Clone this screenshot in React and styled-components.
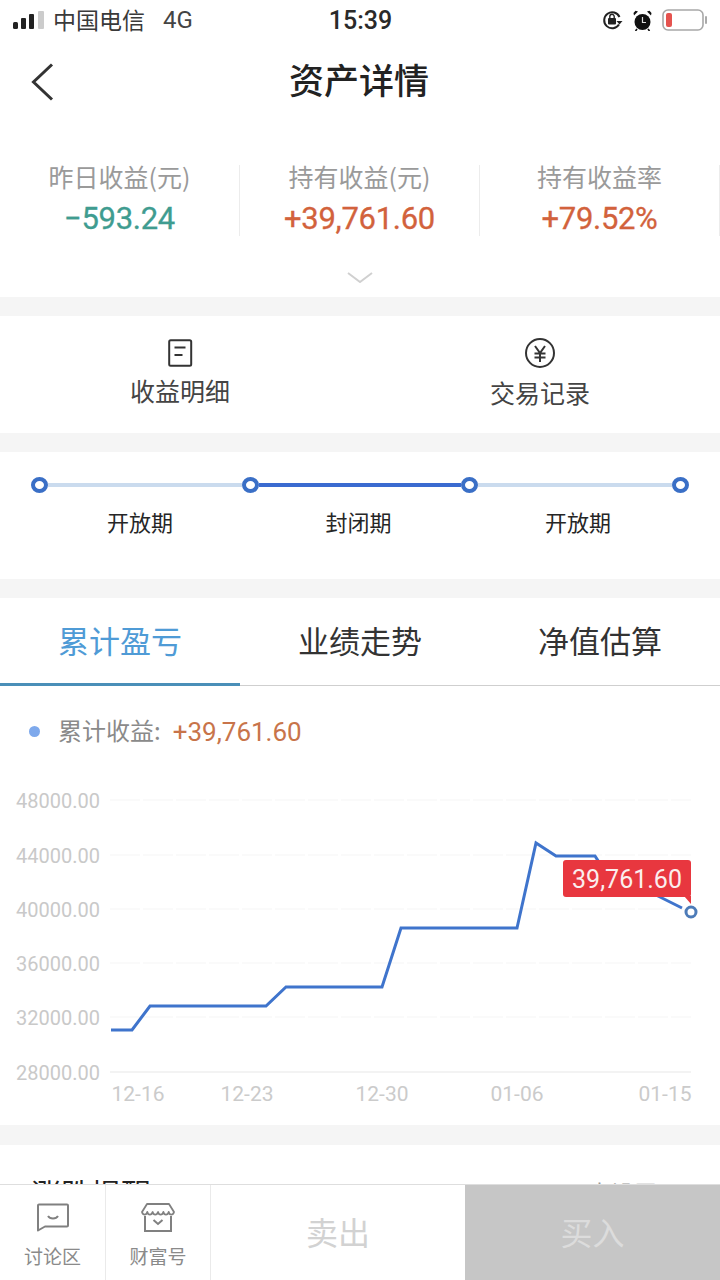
import styled, { createGlobalStyle } from 'styled-components';

const CJK = `"Noto Sans CJK SC", "Noto Sans", sans-serif`;
const NUM = `Roboto, "Noto Sans CJK SC", sans-serif`;

const GlobalStyle = createGlobalStyle`
  html, body {
    margin: 0;
    padding: 0;
    background: #fff;
    font-family: ${CJK};
  }
`;

const Page = styled.div`
  position: relative;
  width: 720px;
  height: 1280px;
  overflow: hidden;
  background: #fff;
`;
const StatusBar = styled.div`
  height: 38px;
  display: grid;
  grid-template-columns: 1fr auto 1fr;
  align-items: center;
  padding: 2px 12px 0 13px;
  box-sizing: border-box;
  color: #333;
`;
const StatusLeft = styled.div`
  display: flex;
  align-items: center;
`;
const Carrier = styled.span`
  margin: -3px 0 0 9px;
  font-size: 23px;
  line-height: 30px;
  color: #3a3a3a;
`;
const Net = styled.span`
  margin-left: 18px;
  font: 400 24px/30px ${NUM};
  color: #444;
`;
const Clock = styled.span`
  padding-top: 1px;
  font: 500 25px/30px ${NUM};
  color: #2a2a2a;
`;
const StatusRight = styled.div`
  display: flex;
  align-items: center;
  justify-content: flex-end;
  gap: 10px;
`;
const Nav = styled.div`
  height: 87px;
  display: grid;
  grid-template-columns: 1fr auto 1fr;
  align-items: center;
  padding: 0 30px;
`;
const Title = styled.h1`
  margin: 0 2px 6px 0;
  font-size: 35px;
  font-weight: 500;
  line-height: 44px;
  color: #222;
`;
const Gap = styled.div`
  height: ${(p) => p.$height || 19}px;
  background: #f5f5f5;
`;
const Summary = styled.section`
  height: 172px;
  padding-top: 40px;
  box-sizing: border-box;
`;
const SummaryRow = styled.div`
  display: grid;
  grid-template-columns: repeat(3, 240px);
`;
const SummaryCell = styled.div`
  height: 71px;
  display: flex;
  flex-direction: column;
  align-items: center;
  border-right: 1px solid #ececec;
  box-sizing: border-box;
`;
const SummaryLabel = styled.div`
  margin-top: -1px;
  font-size: 25px;
  line-height: 24px;
  color: #9a9a9a;
`;
const SummaryValue = styled.div`
  margin-top: 13px;
  font: 400 31px/36px ${NUM};
  letter-spacing: -0.3px;
  -webkit-text-stroke: 0.3px ${(p) => p.$color};
  color: ${(p) => p.$color};
`;
const Expand = styled.div`
  display: flex;
  justify-content: center;
  margin-top: 36px;
`;
const Actions = styled.section`
  height: 117px;
  padding-top: 22px;
  box-sizing: border-box;
  display: grid;
  grid-template-columns: repeat(2, 360px);
`;
const ActionItem = styled.div`
  display: flex;
  flex-direction: column;
  align-items: center;
  gap: ${(p) => p.$gap}px;
`;
const ActionLabel = styled.div`
  font-size: 25px;
  line-height: 30px;
  color: #444;
`;
const Timeline = styled.section`
  height: 127px;
  padding: 25px 31px 0;
  box-sizing: border-box;
`;
const Track = styled.div`
  display: flex;
  align-items: center;
`;
const Dot = styled.span`
  width: 17px;
  height: 16px;
  flex: none;
  border: 4px solid #3a6fc6;
  border-radius: 50%;
  box-sizing: border-box;
  background: #fff;
`;
const Rail = styled.span`
  height: 4px;
  width: ${(p) => p.$width}px;
  flex: none;
  background: ${(p) => (p.$active ? '#3a6bd0' : '#cadbee')};
`;
const Periods = styled.div`
  display: grid;
  grid-template-columns: 218px 219px 220px;
  margin-top: 13px;
`;
const Period = styled.div`
  text-align: center;
  font-size: 22px;
  line-height: 30px;
  color: #262626;
`;
const Tabs = styled.div`
  height: 88px;
  display: grid;
  grid-template-columns: repeat(3, 240px);
  box-sizing: border-box;
  border-bottom: 1px solid #cfcfcf;
`;
const Tab = styled.div`
  display: flex;
  align-items: center;
  justify-content: center;
  padding-bottom: 6px;
  font-size: 31px;
  color: ${(p) => (p.$active ? '#4f9bd6' : '#333')};
  box-shadow: ${(p) => (p.$active ? 'inset 0 -3px 0 #4a8fb8' : 'none')};
  margin-bottom: -1px;
`;
const Legend = styled.div`
  height: 74px;
  padding: 16px 0 0 29px;
  box-sizing: border-box;
  display: flex;
  align-items: center;
`;
const LegendDot = styled.span`
  width: 11px;
  height: 11px;
  border-radius: 50%;
  background: #7ea9ec;
`;
const LegendLabel = styled.span`
  margin: -3px 0 0 18px;
  font-size: 24px;
  line-height: 30px;
  color: #8a8a8a;
`;
const LegendValue = styled.span`
  margin: 1px 0 0 12px;
  font: 400 26px/30px ${NUM};
  color: #c8744a;
`;
const ChartBox = styled.div`
  position: relative;
  height: 365px;
`;
const ChartSvg = styled.svg`
  display: block;
  font-family: ${NUM};
`;
const Bubble = styled.div`
  position: absolute;
  left: 563px;
  top: 100px;
  width: 128px;
  height: 37px;
  border-radius: 3px;
  background: #e8373f;
  color: #fbeeee;
  font: 400 25px/40px ${NUM};
  text-align: center;
  &::after {
    content: '';
    position: absolute;
    right: 0;
    top: 36px;
    border-top: 8px solid #e8373f;
    border-left: 7px solid transparent;
  }
`;
const Alerts = styled.section`
  padding: 32px 31px 0;
  display: flex;
  justify-content: space-between;
`;
const AlertTitle = styled.div`
  font-size: 30px;
  line-height: 30px;
  color: #222;
`;
const AlertLink = styled.div`
  font-size: 23px;
  line-height: 30px;
  color: #999;
  display: flex;
  align-items: center;
  gap: 23px;
`;
const Footer = styled.footer`
  position: absolute;
  left: 0;
  right: 0;
  bottom: 0;
  height: 96px;
  display: grid;
  grid-template-columns: 106px 105px 254px 255px;
  background: #fff;
  border-top: 1px solid #dedede;
  box-sizing: border-box;
`;
const FootItem = styled.div`
  display: flex;
  flex-direction: column;
  align-items: center;
  padding-top: 18px;
  box-sizing: border-box;
  border-right: 1px solid #eaeaea;
`;
const FootLabel = styled.div`
  margin-top: 11px;
  font-size: 19px;
  line-height: 26px;
  color: #8a8a8a;
`;
const TradeButton = styled.div`
  display: flex;
  align-items: center;
  justify-content: center;
  padding-bottom: 4px;
  font-size: 32px;
  background: ${(p) => (p.$buy ? '#c6c6c6' : '#fff')};
  color: ${(p) => (p.$buy ? '#dcdcdc' : '#d2d2d2')};
`;

const yTicks = [
  ['48000.00', 800],
  ['44000.00', 855],
  ['40000.00', 909],
  ['36000.00', 963],
  ['32000.00', 1017],
  ['28000.00', 1072],
];
const xTicks = [
  ['12-16', 138],
  ['12-23', 247],
  ['12-30', 382],
  ['01-06', 517],
  ['01-15', 665],
];
const linePoints =
  '111,1030 132,1030 150,1006 266,1006 286,987 382,987 401,928 517,928 536,843 556,856 595,856 604,870 660,897 682,908';

const Signal = () => (
  <svg width="31" height="18" viewBox="0 0 31 18">
    <rect x="0" y="11" width="5" height="7" rx="1.5" fill="#222" />
    <rect x="8" y="7" width="5" height="11" rx="1" fill="#222" />
    <rect x="16" y="3" width="5" height="15" rx="1" fill="#222" />
    <rect x="25" y="0" width="6" height="18" rx="1" fill="#ccc" />
  </svg>
);
const RotationLock = () => (
  <svg width="21" height="20" viewBox="0 0 21 20" fill="none">
    <path d="M17 14.5A8 8 0 1 1 17.5 7" stroke="#222" strokeWidth="2" />
    <path d="M14.5 11h6l-3 3.5z" fill="#222" />
    <rect x="6" y="8" width="8" height="6.5" rx="1" fill="#222" />
    <path d="M7.8 8V6.5a2.2 2.2 0 0 1 4.4 0V8" stroke="#222" strokeWidth="1.4" />
  </svg>
);
const Alarm = () => (
  <svg width="19" height="21" viewBox="0 0 19 21">
    <circle cx="9.5" cy="12" r="8" fill="#111" />
    <path d="M1 5.5 5 1.5 2.5.8.5 3zM18 5.5 14 1.5 16.5.8 18.5 3z" fill="#111" />
    <path d="M9.5 7v5.5h3.5" stroke="#ddd" strokeWidth="1.2" fill="none" />
    <path d="M4 19l-1.5 2M15 19l1.5 2" stroke="#111" strokeWidth="1.6" />
  </svg>
);
const Battery = () => (
  <svg width="46" height="22" viewBox="0 0 46 22">
    <rect x="1" y="1" width="40" height="20" rx="5" fill="#fff" stroke="#a8a8a8" strokeWidth="1.6" />
    <rect x="4" y="4" width="6" height="14" rx="2" fill="#e5534f" />
    <path d="M44 8v6" stroke="#aaa" strokeWidth="2" strokeLinecap="round" />
  </svg>
);
const BackIcon = () => (
  <svg width="24" height="38" viewBox="0 0 24 38" fill="none">
    <path d="M22 1.5 3.5 19 22 36.5" stroke="#333" strokeWidth="3" />
  </svg>
);
const ChevronDown = () => (
  <svg width="26" height="11" viewBox="0 0 26 11" fill="none" style={{ display: 'block' }}>
    <path d="M1 1l12 9 12-9" stroke="#d0d0d0" strokeWidth="2" />
  </svg>
);
const DocIcon = () => (
  <svg width="30" height="30" viewBox="0 0 30 30" fill="none" style={{ display: 'block' }}>
    <rect x="4.2" y="2.2" width="22" height="25.6" rx="1.5" stroke="#333" strokeWidth="2" />
    <path d="M9.5 9.5h11M9.5 17h8" stroke="#333" strokeWidth="2" />
  </svg>
);
const YenIcon = () => (
  <svg width="30" height="30" viewBox="0 0 30 30" fill="none" style={{ display: 'block' }}>
    <circle cx="15" cy="15" r="14" stroke="#333" strokeWidth="2" />
    <path d="M10 8l5 7 5-7M9.5 15.5h11M9.5 19.5h11M15 15v9" stroke="#333" strokeWidth="2" />
  </svg>
);
const ChatIcon = () => (
  <svg width="34" height="29" viewBox="0 0 34 29" fill="none" style={{ display: 'block' }}>
    <path
      d="M2 2.5a1 1 0 0 1 1-1h28a1 1 0 0 1 1 1v20a1 1 0 0 1-1 1H9l-7 4z"
      stroke="#808080"
      strokeWidth="2"
      strokeLinejoin="round"
    />
    <path d="M12 13c2 3.2 8 3.2 10 0" stroke="#808080" strokeWidth="2" />
  </svg>
);
const ShopIcon = () => (
  <svg width="34" height="29" viewBox="0 0 34 29" fill="none" style={{ display: 'block' }}>
    <path
      d="M6 1h22l5 8c-1 3.5-4.5 3.5-5.3 0-1 3.5-4.5 3.500-5.300 0-1 3.500-4.500 3.500-5.400 0-1 3.500-4.500 3.500-5.400 0-1 3.500-4.500 3.500-5.300 0-1 3.500-4.300 3.500-5.300 0z"
      stroke="#808080"
      strokeWidth="1.8"
      strokeLinejoin="round"
    />
    <path d="M4 13v15h26V13" stroke="#808080" strokeWidth="2" />
    <path d="M12.5 17l4.5 4 4.500-4" stroke="#808080" strokeWidth="2" />
  </svg>
);
const SmallArrow = () => (
  <svg width="9" height="16" viewBox="0 0 9 16" fill="none">
    <path d="M1 1l7 7-7 7" stroke="#bbb" strokeWidth="1.6" />
  </svg>
);

const Chart = () => (
  <ChartBox>
    <ChartSvg width="720" height="365" viewBox="0 760 720 365">
      {yTicks.map(([label, y], i) => (
        <g key={label}>
          <line
            x1="110"
            x2="691"
            y1={y}
            y2={y}
            stroke={i === yTicks.length - 1 ? '#efefef' : '#f9f9f9'}
            strokeWidth="1.5"
            strokeDasharray={i === yTicks.length - 1 ? undefined : '30 3'}
          />
          <text x="100" y={y + 8} textAnchor="end" fontSize="20" fill="#c9c9c9">
            {label}
          </text>
        </g>
      ))}
      {xTicks.map(([label, x]) => (
        <text key={label} x={x} y="1101" textAnchor="middle" fontSize="21" fill="#cbcbcb">
          {label}
        </text>
      ))}
      <polyline points={linePoints} fill="none" stroke="#3f74cc" strokeWidth="3" strokeLinejoin="miter" />
      <circle cx="691" cy="912" r="5" fill="#fff" stroke="#4d7bb8" strokeWidth="3" />
    </ChartSvg>
    <Bubble>39,761.60</Bubble>
  </ChartBox>
);

export default function App() {
  return (
    <Page>
      <GlobalStyle />
      <StatusBar>
        <StatusLeft>
          <Signal />
          <Carrier>中国电信</Carrier>
          <Net>4G</Net>
        </StatusLeft>
        <Clock>15:39</Clock>
        <StatusRight>
          <RotationLock />
          <Alarm />
          <Battery />
        </StatusRight>
      </StatusBar>
      <Nav>
        <BackIcon />
        <Title>资产详情</Title>
      </Nav>
      <Summary>
        <SummaryRow>
          <SummaryCell>
            <SummaryLabel>昨日收益(元)</SummaryLabel>
            <SummaryValue $color="#3f9c90">−593.24</SummaryValue>
          </SummaryCell>
          <SummaryCell>
            <SummaryLabel>持有收益(元)</SummaryLabel>
            <SummaryValue $color="#d2623c">+39,761.60</SummaryValue>
          </SummaryCell>
          <SummaryCell>
            <SummaryLabel>持有收益率</SummaryLabel>
            <SummaryValue $color="#d2623c">+79.52%</SummaryValue>
          </SummaryCell>
        </SummaryRow>
        <Expand>
          <ChevronDown />
        </Expand>
      </Summary>
      <Gap />
      <Actions>
        <ActionItem $gap={7}>
          <DocIcon />
          <ActionLabel>收益明细</ActionLabel>
        </ActionItem>
        <ActionItem $gap={9}>
          <YenIcon />
          <ActionLabel>交易记录</ActionLabel>
        </ActionItem>
      </Actions>
      <Gap />
      <Timeline>
        <Track>
          <Dot />
          <Rail $width={194} />
          <Dot />
          <Rail $width={202} $active />
          <Dot />
          <Rail $width={194} />
          <Dot />
        </Track>
        <Periods>
          <Period>开放期</Period>
          <Period>封闭期</Period>
          <Period>开放期</Period>
        </Periods>
      </Timeline>
      <Gap />
      <Tabs>
        <Tab $active>累计盈亏</Tab>
        <Tab>业绩走势</Tab>
        <Tab>净值估算</Tab>
      </Tabs>
      <Legend>
        <LegendDot />
        <LegendLabel>累计收益:</LegendLabel>
        <LegendValue>+39,761.60</LegendValue>
      </Legend>
      <Chart />
      <Gap $height={20} />
      <Alerts>
        <AlertTitle>涨跌提醒</AlertTitle>
        <AlertLink>
          去设置
          <SmallArrow />
        </AlertLink>
      </Alerts>
      <Footer>
        <FootItem>
          <ChatIcon />
          <FootLabel>讨论区</FootLabel>
        </FootItem>
        <FootItem>
          <ShopIcon />
          <FootLabel>财富号</FootLabel>
        </FootItem>
        <TradeButton>卖出</TradeButton>
        <TradeButton $buy>买入</TradeButton>
      </Footer>
    </Page>
  );
}
